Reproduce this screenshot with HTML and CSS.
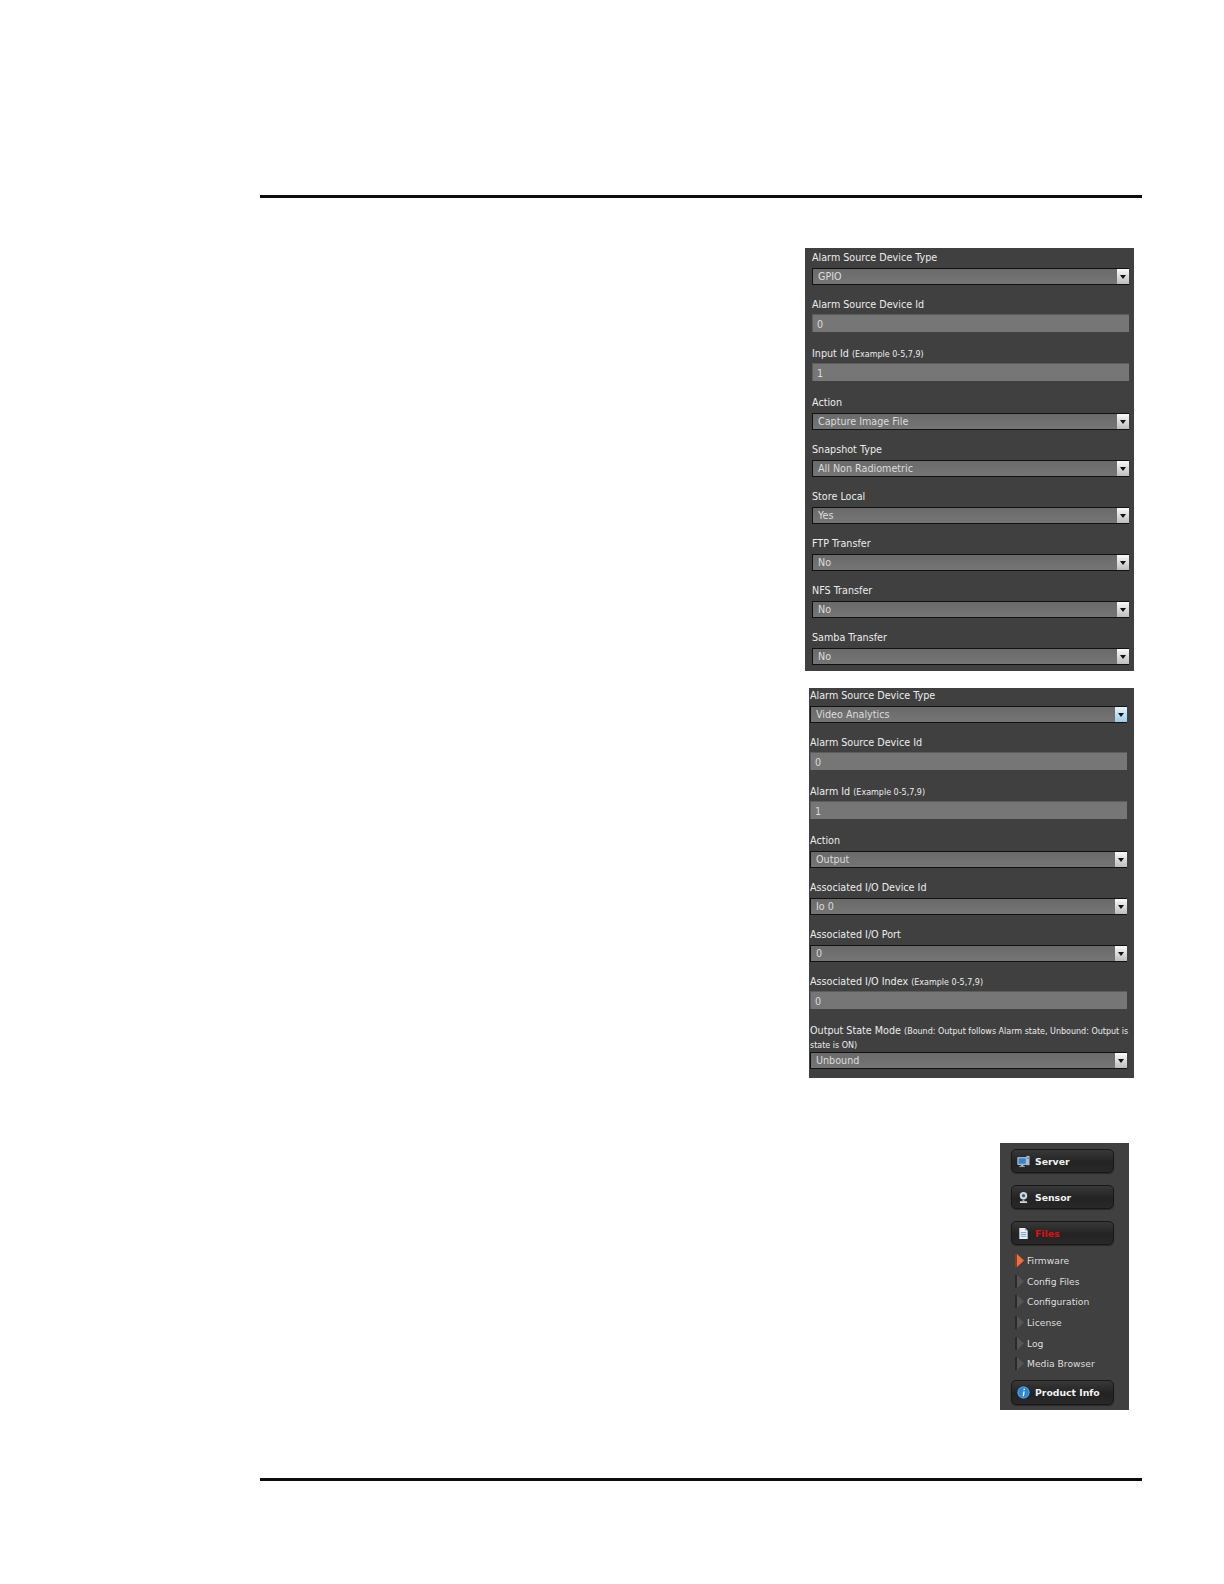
FILE: index.html
```html
<!DOCTYPE html>
<html lang="en">
<head>
<meta charset="utf-8">
<title>Alarm configuration</title>
<link rel="stylesheet" href="styles.css">
</head>
<body>
<main class="page">
  <hr class="rule">
  <section class="panel panel-gpio">
    <div class="field"><div class="label">Alarm Source Device Type</div><div class="select">GPIO<span class="arrow"></span></div></div>
    <div class="field field-input"><div class="label">Alarm Source Device Id</div><div class="input">0</div></div>
    <div class="field field-input"><div class="label">Input Id <small>(Example 0-5,7,9)</small></div><div class="input">1</div></div>
    <div class="field"><div class="label">Action</div><div class="select">Capture Image File<span class="arrow"></span></div></div>
    <div class="field"><div class="label">Snapshot Type</div><div class="select">All Non Radiometric<span class="arrow"></span></div></div>
    <div class="field"><div class="label">Store Local</div><div class="select">Yes<span class="arrow"></span></div></div>
    <div class="field"><div class="label">FTP Transfer</div><div class="select">No<span class="arrow"></span></div></div>
    <div class="field"><div class="label">NFS Transfer</div><div class="select">No<span class="arrow"></span></div></div>
    <div class="field"><div class="label">Samba Transfer</div><div class="select">No<span class="arrow"></span></div></div>
  </section>
  <section class="panel panel-video">
    <div class="field"><div class="label">Alarm Source Device Type</div><div class="select select-focus">Video Analytics<span class="arrow"></span></div></div>
    <div class="field field-input"><div class="label">Alarm Source Device Id</div><div class="input">0</div></div>
    <div class="field field-input"><div class="label">Alarm Id <small>(Example 0-5,7,9)</small></div><div class="input">1</div></div>
    <div class="field"><div class="label">Action</div><div class="select">Output<span class="arrow"></span></div></div>
    <div class="field"><div class="label">Associated I/O Device Id</div><div class="select">Io 0<span class="arrow"></span></div></div>
    <div class="field"><div class="label">Associated I/O Port</div><div class="select">0<span class="arrow"></span></div></div>
    <div class="field field-input"><div class="label">Associated I/O Index <small>(Example 0-5,7,9)</small></div><div class="input">0</div></div>
    <div class="field field-last"><div class="label label-two">Output State Mode <small>(Bound: Output follows Alarm state, Unbound: Output is<br>state is ON)</small></div><div class="select">Unbound<span class="arrow"></span></div></div>
  </section>
  <nav class="panel-nav">
    <div class="navbtn">
      <svg class="icon" viewBox="0 0 14 14"><rect x="1" y="3" width="9" height="7" fill="#3f7fc4" stroke="#cfe0f2"/><rect x="4" y="10" width="3" height="2" fill="#9db6cf"/><rect x="2.5" y="12" width="6" height="1" fill="#9db6cf"/><rect x="10" y="1" width="3.5" height="10" fill="#a9bccd"/><rect x="11" y="3" width="1.5" height="1" fill="#40566d"/></svg>
      Server
    </div>
    <div class="navbtn">
      <svg class="icon" viewBox="0 0 14 14"><circle cx="7" cy="5" r="4" fill="#cfd6dc"/><circle cx="7" cy="5" r="1.8" fill="#2f5f9a"/><rect x="6" y="9" width="2" height="2" fill="#aab2b9"/><rect x="3" y="11" width="8" height="2" rx="1" fill="#d8dde1"/></svg>
      Sensor
    </div>
    <div class="navbtn navbtn-active">
      <svg class="icon" viewBox="0 0 14 14"><path d="M2.500 1h6l3 3v9h-9z" fill="#e8f1f8"/><path d="M8.500 1v3h3z" fill="#9cc0dc"/><path d="M4 6h6M4 8h6M4 10h6" stroke="#6fa3cc"/></svg>
      Files
    </div>
    <ul class="subnav">
      <li class="subnav-current"><svg class="tri" viewBox="0 0 9 13"><rect width="2" height="13" fill="#8a3a22"/><path d="M2 0l7 6.500-7 6.500z" fill="#f0703c"/></svg>Firmware</li>
      <li><svg class="tri" viewBox="0 0 9 13"><rect width="2" height="13" fill="#2a2a2a"/><path d="M2 0l7 6.500-7 6.500z" fill="#555"/></svg>Config Files</li>
      <li><svg class="tri" viewBox="0 0 9 13"><rect width="2" height="13" fill="#2a2a2a"/><path d="M2 0l7 6.500-7 6.500z" fill="#555"/></svg>Configuration</li>
      <li><svg class="tri" viewBox="0 0 9 13"><rect width="2" height="13" fill="#2a2a2a"/><path d="M2 0l7 6.500-7 6.500z" fill="#555"/></svg>License</li>
      <li><svg class="tri" viewBox="0 0 9 13"><rect width="2" height="13" fill="#2a2a2a"/><path d="M2 0l7 6.500-7 6.500z" fill="#555"/></svg>Log</li>
      <li><svg class="tri" viewBox="0 0 9 13"><rect width="2" height="13" fill="#2a2a2a"/><path d="M2 0l7 6.500-7 6.500z" fill="#555"/></svg>Media Browser</li>
    </ul>
    <div class="navbtn navbtn-last">
      <svg class="icon" viewBox="0 0 14 14"><circle cx="7" cy="7" r="6.500" fill="#2c86d6"/><circle cx="7" cy="7" r="6" fill="none" stroke="#7dbcf0" stroke-width=".6"/><path d="M7.300 3h1.500l-.3 1.500H7zM6.800 5.800h1.500L7.500 11H6z" fill="#fff"/></svg>
      Product Info
    </div>
  </nav>
  <hr class="rule rule-bottom">
</main>
</body>
</html>
```
FILE: styles.css
```css
* { box-sizing: border-box; }
html, body { margin: 0; padding: 0; background: #fff; }
body { height: 1584px; overflow: hidden; font-family: "DejaVu Sans", Verdana, sans-serif; }
.page { width: 882px; margin-left: 260px; padding-top: 195px; display: flex; flex-direction: column; align-items: flex-end; }
.rule { width: 100%; height: 3px; margin: 0; border: 0; background: #0d0d0d; flex: none; }
.rule-bottom { margin-top: 68px; }

.panel { background: #404040; color: #ececec; overflow: hidden; margin-right: 8px; flex: none; }
.panel-gpio { width: 329px; height: 423px; margin-top: 50px; padding: 2px 5px 0 7px; }
.panel-video { width: 325px; height: 390px; margin-top: 17px; padding: 0 7px 0 1px; }

.field { margin-bottom: 12px; }
.field-input { margin-bottom: 14px; }
.field-last { margin-bottom: 0; }
.label { height: 14px; margin-bottom: 4px; font-size: 9.6px; line-height: 16px; white-space: nowrap; }
.field-input .label { margin-bottom: 3px; }
.label small { font-size: 8px; }
.label-two { height: 26px; line-height: 13px; margin-bottom: 3px; padding-top: 1px; }

.select, .input { position: relative; font-size: 9.6px; color: #dcdcdc; padding-left: 5px; }
.select { height: 17px; line-height: 16px; background: linear-gradient(#6a6a6a, #757575); border: 1px solid #111; border-width: 1px 0 1px 1px; }
.input { height: 18px; line-height: 19px; background: #767676; border-top: 1px solid #5c5c5c; border-left: 1px solid #5c5c5c; padding-left: 4px; }
.arrow { position: absolute; right: 0; top: 0; bottom: 0; width: 12px; background: linear-gradient(#fafafa, #bdbdbd); }
.arrow::after { content: ""; position: absolute; left: 3px; top: 6px; border: 3px solid transparent; border-top: 4px solid #111; border-bottom: 0; }
.select-focus .arrow { background: linear-gradient(#e6f3fb, #9ccbe8); }

.panel-nav { width: 129px; height: 267px; margin-top: 65px; margin-right: 13px; padding: 6px 15px 0 11px; background: #404040; flex: none; }
.navbtn { display: flex; align-items: center; height: 24px; margin-bottom: 12px; padding-left: 5px; gap: 5px; font-size: 9.3px; font-weight: 700; color: #f2f2f2; border: 1px solid #181818; border-radius: 5px; background: linear-gradient(#383838, #232323 55%, #282828); box-shadow: 0 1px 1px #2a2a2a; white-space: nowrap; }
.navbtn-active { margin-bottom: 0; color: #e01010; }
.navbtn-last { margin-bottom: 0; margin-top: 6px; height: 25px; }
.icon { width: 13px; height: 13px; flex: none; }
.subnav { list-style: none; margin: 5px 0 0 4px; padding: 0; }
.subnav li { display: flex; align-items: center; height: 20.7px; gap: 3px; font-size: 9.2px; color: #dedede; white-space: nowrap; }
.tri { width: 9px; height: 13px; flex: none; }
```
